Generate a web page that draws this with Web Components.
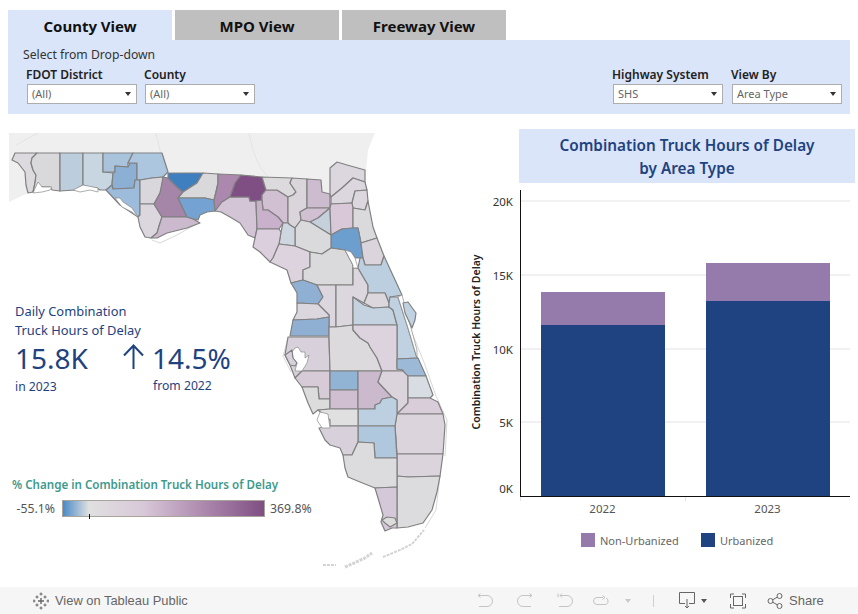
<!DOCTYPE html>
<html>
<head>
<meta charset="utf-8">
<title>Combination Truck Hours of Delay</title>
<style>
  html, body { margin: 0; padding: 0; background: #fff; }
  body { font-family: "Noto Sans", "Open Sans", sans-serif; width: 858px; height: 614px; overflow: hidden; }
</style>
</head>
<body>
<delay-dashboard></delay-dashboard>

<script>
const NAVY = '#1f4280';
const PURPLE = '#957bab';
const BAND = '#dae5f9';

class ViewTab extends HTMLElement {
  constructor() {
    super();
    this.attachShadow({ mode: 'open' });
    this.shadowRoot.innerHTML = `
      <style>
        :host {
          display: flex;
          align-items: center;
          justify-content: center;
          width: 164px;
          height: 30px;
          padding-top: 1px;
          box-sizing: border-box;
          background: #bfbfbf;
          color: #111;
          font-size: 15px;
          font-weight: 700;
        }
        :host([active]) { background: ${BAND}; }
      </style>
      <slot></slot>
    `;
  }
}
customElements.define('view-tab', ViewTab);

class FilterSelect extends HTMLElement {
  constructor() {
    super();
    this.attachShadow({ mode: 'open' });
  }

  connectedCallback() {
    this.shadowRoot.innerHTML = `
      <style>
        :host { display: block; width: 110px; }
        .label {
          font-size: 12px;
          font-weight: 600;
          line-height: 15px;
          color: #222;
          margin-left: -1px;
          white-space: nowrap;
        }
        .box {
          box-sizing: border-box;
          height: 20px;
          margin-top: 2px;
          padding: 0 5px 2px 4px;
          display: flex;
          align-items: center;
          justify-content: space-between;
          background: #fff;
          border: 1px solid #adadad;
          color: #666;
          font-size: 11px;
        }
        .caret {
          width: 0;
          height: 0;
          margin-top: 2px;
          border-left: 3.5px solid transparent;
          border-right: 3.5px solid transparent;
          border-top: 4px solid #333;
        }
      </style>
      <div class="label">${this.getAttribute('label')}</div>
      <div class="box"><slot></slot><span class="caret"></span></div>
    `;
  }
}
customElements.define('filter-select', FilterSelect);

class FilterBar extends HTMLElement {
  constructor() {
    super();
    this.attachShadow({ mode: 'open' });
    this.shadowRoot.innerHTML = `
      <style>
        :host {
          display: block;
          box-sizing: border-box;
          margin: 0 8px;
          height: 74px;
          padding: 7px 8px 0 15px;
          background: ${BAND};
        }
        .hint { font-size: 12.2px; line-height: 16px; color: #333; }
        .rows { display: flex; margin-top: 4px; padding-left: 4px; }
        .group { display: flex; gap: 8px; }
        .group.right { margin-left: auto; gap: 9px; }
      </style>
      <div class="hint">Select from Drop-down</div>
      <div class="rows">
        <div class="group">
          <filter-select label="FDOT District">(All)</filter-select>
          <filter-select label="County">(All)</filter-select>
        </div>
        <div class="group right">
          <filter-select label="Highway System">SHS</filter-select>
          <filter-select label="View By">Area Type</filter-select>
        </div>
      </div>
    `;
  }
}
customElements.define('filter-bar', FilterBar);

// county shapes in page pixels, traced off the screenshot
const COUNTIES = [
  ['#dcd9df', '15,153 37,153 32,158 31,163 33,170 36,175 35,183 33,192 28,193 26,185 25,172 18,163 12,160'],
  ['#d9d9db', '37,153 60,153 60,191 52,190 50,187 41,187 38,190 33,192 35,183 36,175 33,170 31,163 32,158'],
  ['#bccddd', '60,153 83,153 83,185 75,190 60,191'],
  ['#c8d6e2', '83,153 103,153 103,172 113,173 112,185 106,190 100,190 97,188 90,187 83,185'],
  ['#a9c3dd', '103,153 133,153 128,163 128,167 115,166 115,172 103,172'],
  ['#8cafd4', '115,166 128,167 130,163 137,163 137,180 135,180 134,188 113,189 112,185 113,173 115,172'],
  ['#adc6e0', '133,153 162,153 168,172 163,177 152,178 140,180 137,180 137,163 130,163 128,163'],
  ['#9dbbdb', '106,190 112,185 113,189 134,188 135,180 140,180 140,215 138,217 120,205'],
  ['#d9d6dc', '140,180 152,178 163,177 165,178 160,193 154,204 140,204'],
  ['#dcd6de', '140,204 154,204 162,217 160,223 157,233 151,238 145,237 140,227 138,217 140,215'],
  ['#a585a8', '163,177 168,178 177,187 183,192 178,198 187,217 162,217 154,204 160,193'],
  ['#cbb9cd', '162,217 187,217 193,219 200,223 187,228 167,233 157,238 151,238 157,233 160,223'],
  ['#3f7fc0', '168,173 203,173 197,183 183,192 177,187 168,178'],
  ['#d9d9db', '203,173 218,174 218,183 216,192 214,200 205,198 181,198 178,198 183,192 197,183'],
  ['#74a3d3', '178,198 181,198 205,198 214,200 215,211 207,212 200,215 198,220 187,217'],
  ['#ad88ae', '218,174 241,175 235,183 230,197 222,202 215,211 214,200 216,192 218,183'],
  ['#d3c5d6', '230,197 249,197 250,201 256,201 257,229 255,238 248,235 240,223 230,217 221,212 215,211 222,202'],
  ['#7f4f83', '241,175 262,177 266,190 262,195 262,200 256,201 250,201 249,197 230,197 235,183'],
  ['#d0c0d2', '262,195 266,190 277,190 285,195 288,197 288,223 283,223 278,217 268,210 263,210 262,200'],
  ['#c9b0cb', '256,201 262,200 263,210 268,210 278,217 283,223 279,229 257,229'],
  ['#dcdadd', '262,177 292,178 290,183 296,192 293,195 288,197 285,195 277,190 266,190'],
  ['#d9d5db', '292,178 307,179 307,208 300,212 301,220 295,228 290,225 288,223 288,197 293,195 296,192 290,183'],
  ['#cdbccf', '307,179 321,180 322,192 330,194 330,208 307,208'],
  ['#d0c0d2', '307,208 330,208 318,218 310,222 301,220 300,212'],
  ['#c5d0dc', '330,208 331,235 310,222 318,218'],
  ['#dcd6de', '330,168 337,162 347,165 365,170 365,182 353,178 342,188 331,197 330,194'],
  ['#dcd6de', '331,197 342,188 353,178 365,182 367,190 355,191 352,203 331,204'],
  ['#dcd6de', '355,191 367,190 368,201 365,210 353,208 352,203'],
  ['#d8c8d8', '331,204 352,203 353,208 353,228 342,229 331,235 330,208'],
  ['#dad9dc', '353,208 365,210 368,201 373,227 377,238 361,243 358,228 353,228'],
  ['#6d9fce', '342,229 353,228 358,228 361,243 363,258 355,258 351,252 347,253 345,250 331,248 331,235'],
  ['#dcd4dd', '361,243 377,238 384,256 381,265 365,265 363,258'],
  ['#dadadc', '301,220 310,222 331,235 331,248 322,254 310,252 295,246 295,228'],
  ['#ced7df', '283,223 288,223 290,225 295,228 295,246 279,244 281,232'],
  ['#dccfdd', '257,229 279,229 281,232 279,244 273,258 270,262 260,252 253,247 255,238'],
  ['#ddd3de', '279,244 295,246 310,252 310,267 303,270 303,280 291,283 287,270 270,262 273,258'],
  ['#dadadc', '310,252 322,254 331,248 345,250 353,265 353,285 317,285 303,280 303,270 310,267'],
  ['#8fb0d2', '291,283 303,280 317,285 323,297 318,304 297,303 297,293'],
  ['#dcd6de', '317,285 336,285 336,327 329,327 329,315 318,304 323,297'],
  ['#dcd6de', '336,285 353,285 353,268 358,268 368,285 368,293 364,303 353,297 353,325 336,327'],
  ['#bccfe0', '360,258 363,258 365,265 381,265 384,256 402,295 390,297 389,303 385,293 368,293 368,285 358,268'],
  ['#dbd7dd', '364,303 368,293 385,293 389,303 389,307 373,308'],
  ['#c5d3e0', '353,297 364,305 373,308 389,307 393,310 397,325 353,325'],
  ['#c0d2e2', '390,297 398,297 408,328 417,358 397,359 397,325 393,310 389,307 389,303'],
  ['#dcd6de', '297,303 318,304 329,315 329,317 317,319 293,320 297,312'],
  ['#8fb0d2', '293,320 317,319 329,317 329,336 290,336'],
  ['#d8d0db', '288,337 329,337 330,371 302,371 295,378 290,365 285,355'],
  ['#dcdadd', '329,337 329,327 336,327 353,325 353,330 360,338 368,343 370,347 377,358 382,371 330,371'],
  ['#dcd3de', '353,325 397,325 397,369 403,370 403,371 382,371 377,358 370,347 368,343 360,338 353,330'],
  ['#9cb9d8', '397,359 418,358 426,376 403,376 403,370 397,369'],
  ['#d7cbd8', '302,371 330,371 330,399 319,399 318,387 302,387 295,378'],
  ['#dcdcdd', '302,387 318,387 319,399 330,399 330,409 318,410 313,414 308,403'],
  ['#92b4d4', '330,371 358,371 358,390 330,390'],
  ['#cfbfd1', '330,390 358,390 358,409 330,409'],
  ['#cbbacd', '358,371 382,371 378,382 392,397 382,399 380,403 375,405 375,409 358,409'],
  ['#dcd4dd', '382,371 403,371 408,376 408,398 408,403 397,414 397,400 392,397 378,382'],
  ['#d7dde2', '408,376 426,376 433,395 430,398 408,398'],
  ['#d8cdd9', '408,398 430,398 438,402 443,414 397,414 408,403'],
  ['#dcd4dd', '397,414 443,414 445,425 443,454 397,454 395,426'],
  ['#dcd4dd', '397,454 443,454 440,476 408,477 397,476'],
  ['#dcdbde', '397,476 408,477 440,476 437,492 432,510 423,523 408,527 397,528'],
  ['#bcd0e2', '358,409 375,409 375,405 380,403 382,399 392,397 397,400 397,414 395,426 358,426'],
  ['#b0c8de', '358,426 395,426 397,458 375,458 374,443 358,442'],
  ['#e0e0e0', '318,410 330,409 358,409 358,426 330,426 330,420'],
  ['#d8d0db', '330,426 358,426 358,442 352,455 343,455 340,448 330,445 325,440 319,428'],
  ['#dcdbde', '343,455 352,455 358,442 374,443 375,458 397,458 397,487 375,488 360,482 348,477 345,468'],
  ['#d5c8d8', '375,488 397,487 397,528 392,528 385,531 381,522 383,515 378,498'],
  ['#dcdcdd', '382,520 387,517 395,518 397,523 390,527 385,523'],
];

const WATER = [
  '33,193 38,182 42,187 52,187 50,190 42,192',
  '73,190 83,185 98,188 98,192 90,190 80,192',
  '115,198 120,198 123,202 132,208 138,217 132,212 122,207',
  '295,348 298,347 301,352 305,352 305,358 309,355 307,363 302,371 295,371 297,363 293,358 292,352',
  '320,412 328,414 330,428 322,428 317,420',
  '345,250 351,252 355,258 358,268 353,268 353,265',
  '398,297 402,295 417,350 417,358 408,328',
];

// Pinellas and the barrier island sit on top of the water
const ISLANDS = [
  ['#d8d0db', '285,355 292,350 293,358 297,363 295,366 290,365'],
  ['#c0d2e2', '403,303 408,302 416,313 415,320 412,328 405,313'],
];

class FloridaMap extends HTMLElement {
  constructor() {
    super();
    this.attachShadow({ mode: 'open' });
  }

  connectedCallback() {
    const shape = ([fill, points]) => `<polygon fill="${fill}" points="${points}"/>`;
    const water = WATER.map((points) => `<polygon points="${points}"/>`).join('');
    this.shadowRoot.innerHTML = `
      <style>
        :host { display: block; }
        svg { display: block; }
        .counties polygon { stroke: #808080; stroke-width: 1.2; stroke-linejoin: round; }
        .water polygon { fill: #fff; stroke: #8a8a8a; stroke-width: .7; }
        .faint { fill: none; stroke: #e4e4e4; stroke-width: 1; }
        .coast { fill: none; stroke: #d8d8d8; stroke-width: 1; }
        .keys { fill: none; stroke: #d4d4d4; stroke-width: 2; stroke-dasharray: 3 1; }
      </style>
      <svg width="470" height="473" viewBox="0 114 470 473">
        <polygon fill="#efefef" points="9,133 375,133 368,150 366,171 345,165 337,161 330,168 330,194 322,192 300,178 165,172 140,160 60,155 28,193 9,202"/>
        <path class="faint" d="M38 133 L16 145 M156 133 L165 172 M249 133 Q255 165 268 177"/>
        <path class="coast" d="M152 240 L160 243 L177 235 L198 223 M288 338 L283 356 L291 372 M411 330 L425 365 L436 396 L447 420 L445 456 M440 476 L436 510 L425 528"/>
        <g class="counties">${COUNTIES.map(shape).join('')}</g>
        <g class="water">${water}</g>
        <g class="counties">${ISLANDS.map(shape).join('')}</g>
        <path class="keys" style="stroke-width:3" d="M345 567 L352 564 L365 558 L372 553"/>
        <path class="keys" d="M383 557 L400 550 L412 544 L424 530"/>
        <path class="keys" d="M323 565 L336 565"/>
      </svg>
    `;
  }
}
customElements.define('florida-map', FloridaMap);

class KpiPanel extends HTMLElement {
  constructor() {
    super();
    this.attachShadow({ mode: 'open' });
    this.shadowRoot.innerHTML = `
      <style>
        :host { display: block; padding: 188px 0 0 15px; pointer-events: none; }
        .head { font-size: 12.9px; line-height: 19px; color: ${NAVY}; }
        .grid {
          display: grid;
          grid-template-columns: 108px 29px auto;
          width: fit-content;
          color: ${NAVY};
          margin-top: 1px;
        }
        .big { font-size: 28px; line-height: 34px; height: 34px; white-space: nowrap; }
        .small { font-size: 12.2px; line-height: 18px; margin-top: 3px; }
        .arrow { padding-top: 3px; }
        .arrow svg { display: block; }
        .from { grid-column: 3; padding-left: 1px; margin-top: 2px; }
        .in { grid-column: 1 / span 2; }
        .scale { margin: 81px 0 0 -3px; }
        .title {
          font-size: 11.6px;
          font-weight: 600;
          line-height: 16px;
          color: #3f9a8e;
          white-space: nowrap;
        }
        .row {
          display: flex;
          align-items: center;
          margin-top: 7px;
          color: #555;
          font-size: 12.3px;
        }
        .low { width: 43px; padding-right: 7px; text-align: right; }
        .ramp {
          position: relative;
          box-sizing: border-box;
          width: 203px;
          height: 17px;
          margin-right: 5px;
          border: 1px solid #a8a39b;
          background: linear-gradient(to right, #4a8ac7 0%, #e0e0e0 13%, #d8c8d8 40%, #ad88ae 70%, #7f4f83 100%);
        }
        .ramp i {
          position: absolute;
          left: 26px;
          bottom: -3px;
          width: 1px;
          height: 5px;
          background: #111;
        }
      </style>
      <div class="head">Daily Combination<br>Truck Hours of Delay</div>
      <div class="grid">
        <div class="big">15.8K</div>
        <div class="arrow">
          <svg width="21" height="25" viewBox="0 0 21 25" fill="none" stroke="${NAVY}" stroke-width="2">
            <path d="M10.5 25 V1.5 M1 11.5 L10.5 1.5 L20 11.5"/>
          </svg>
        </div>
        <div class="big">14.5%</div>
        <div class="small in">in 2023</div>
        <div class="small from">from 2022</div>
      </div>
      <div class="scale">
        <div class="title">% Change in Combination Truck Hours of Delay</div>
        <div class="row">
          <span class="low">-55.1%</span>
          <div class="ramp"><i></i></div>
          <span>369.8%</span>
        </div>
      </div>
    `;
  }
}
customElements.define('kpi-panel', KpiPanel);

class DelayChart extends HTMLElement {
  constructor() {
    super();
    this.attachShadow({ mode: 'open' });
  }

  connectedCallback() {
    const grid = [201, 275, 349, 422]
      .map((y) => `<line x1="521" x2="850" y1="${y}" y2="${y}" stroke="#e3e3e3" stroke-width="1"/>`)
      .join('');
    const ticks = [['20K', 206], ['15K', 280], ['10K', 354], ['5K', 427], ['0K', 493]]
      .map(([t, y]) => `<text x="513" y="${y}" text-anchor="end">${t}</text>`)
      .join('');
    this.shadowRoot.innerHTML = `
      <style>
        :host { display: block; }
        svg { display: block; font-family: "Noto Sans", "Open Sans", sans-serif; }
        .ticks { font-size: 11.5px; fill: #333; }
        .years { font-size: 11.5px; fill: #555; }
        .axis-title { font-size: 10.5px; font-weight: 600; fill: #222; }
        .legend {
          display: flex;
          margin: 6px 0 0 111px;
          font-size: 11px;
          line-height: 16px;
          color: #666;
        }
        .item { display: flex; gap: 5px; width: 120px; }
        .swatch { width: 14px; height: 14px; }
      </style>
      <svg width="388" height="344" viewBox="470 183 388 344">
        ${grid}
        <rect x="541" y="325" width="124" height="171" fill="${NAVY}"/>
        <rect x="541" y="292" width="124" height="33" fill="${PURPLE}"/>
        <rect x="706" y="301" width="124" height="195" fill="${NAVY}"/>
        <rect x="706" y="263" width="124" height="38" fill="${PURPLE}"/>
        <line x1="520.5" x2="520.5" y1="190" y2="496.5" stroke="#111"/>
        <line x1="520" x2="850" y1="496.5" y2="496.5" stroke="#111"/>
        <line x1="520.5" x2="520.5" y1="497" y2="501" stroke="#e3e3e3"/>
        <line x1="685.5" x2="685.5" y1="497" y2="501" stroke="#e3e3e3"/>
        <g class="ticks">${ticks}</g>
        <g class="years" text-anchor="middle">
          <text x="602.5" y="513">2022</text>
          <text x="767.5" y="513">2023</text>
        </g>
        <text class="axis-title" text-anchor="middle" transform="translate(480 342) rotate(-90)">Combination Truck Hours of Delay</text>
      </svg>
      <div class="legend">
        <div class="item"><span class="swatch" style="background:${PURPLE}"></span>Non-Urbanized</div>
        <div class="item"><span class="swatch" style="background:${NAVY}"></span>Urbanized</div>
      </div>
    `;
  }
}
customElements.define('delay-chart', DelayChart);

class ViewToolbar extends HTMLElement {
  constructor() {
    super();
    this.attachShadow({ mode: 'open' });
    this.shadowRoot.innerHTML = `
      <style>
        :host {
          display: flex;
          align-items: center;
          height: 27px;
          padding-left: 33px;
          background: #f6f6f6;
          color: #666;
          font-family: "Liberation Sans", Arial, sans-serif;
          font-size: 12.9px;
        }
        svg { display: block; flex: none; fill: none; stroke-width: 1; }
        .off { stroke: #c4c4c4; }
        .on { stroke: #666; }
        .public { margin-left: 6px; width: 133px; white-space: nowrap; }
        .tools { display: flex; align-items: center; margin-left: 289px; }
        .caret {
          width: 0;
          height: 0;
          border-left: 3px solid transparent;
          border-right: 3px solid transparent;
          border-top: 4px solid #c9c9c9;
        }
        .caret.dark { border-top-color: #555; border-left-width: 3.5px; border-right-width: 3.5px; }
        .sep { width: 1px; height: 12px; background: #cfcfcf; }
        .share { margin-left: 6px; font-size: 13px; }
      </style>
      <svg width="16" height="18" viewBox="0 0 16 18" stroke="#666">
        <path stroke-width="1.4" d="M8 6v6M5 9h6"/>
        <path d="M4 3.500v3M2.500 5h3M12 3.500v3M10.500 5h3M4 11.500v3M2.500 13h3M12 11.500v3M10.500 13h3M8 .5v3M6.500 2h3M8 14.500v3M6.500 16h3M1 7.500v3M-.5 9h3M15 7.500v3M13.500 9h3"/>
      </svg>
      <span class="public">View on Tableau Public</span>
      <div class="tools">
        <svg class="off" width="16" height="16" viewBox="0 0 16 16"><path d="M1 2.500h9a5.500 5.500 0 0 1 0 11H2"/><path d="M3.500 .5 1 2.500l2.500 2"/></svg>
        <svg class="off" style="margin-left:24px" width="16" height="16" viewBox="0 0 16 16"><path d="M15 2.500H6a5.500 5.500 0 0 0 0 11h8"/><path d="M12.500 .5 15 2.500l-2.500 2"/></svg>
        <svg class="off" style="margin-left:24px" width="16" height="16" viewBox="0 0 16 16"><path d="M1 .5v4M3 2.500h7a5.500 5.500 0 0 1 0 11H2"/><path d="M5 .5 3 2.500l2 2"/></svg>
        <svg class="off" style="margin-left:20px" width="16" height="16" viewBox="0 0 16 16"><path d="M10 4.500H4a3 3 0 0 0 0 7h8a3 3 0 0 0 3-3.500 3 3 0 0 0-2-3"/><path d="M9.500 2.500 12 4.500 9.500 6.500"/></svg>
        <span class="caret" style="margin-left:16px"></span>
        <span class="sep" style="margin-left:22px"></span>
        <svg class="on" style="margin-left:25px" width="16" height="17" viewBox="0 0 16 17"><path d="M6 11.500H.5v-11h15v11H10M8 7v9"/><path d="M6 14l2 2 2-2"/></svg>
        <span class="caret dark" style="margin-left:6px"></span>
        <svg class="on" style="margin-left:23px" width="16" height="16" viewBox="0 0 16 16"><path d="M4 1H.5v4M12 1h3.500v4M4 15H.5v-4M12 15h3.500v-4"/><rect x="3.500" y="3.500" width="9" height="9"/></svg>
        <svg class="on" style="margin-left:21px" width="16" height="16" viewBox="0 0 16 16"><circle cx="3.500" cy="8" r="2.500"/><circle cx="12.500" cy="3" r="2.500"/><circle cx="12.500" cy="13" r="2.500"/><path d="M5.700 6.800 10.300 4.200M5.700 9.200l4.600 2.600"/></svg>
        <span class="share">Share</span>
      </div>
    `;
  }
}
customElements.define('view-toolbar', ViewToolbar);

class DelayDashboard extends HTMLElement {
  constructor() {
    super();
    this.attachShadow({ mode: 'open' });
    this.shadowRoot.innerHTML = `
      <style>
        :host {
          display: flex;
          flex-direction: column;
          width: 858px;
          height: 614px;
          font-family: "Noto Sans", "Open Sans", sans-serif;
        }
        .tabs { display: flex; gap: 3px; padding: 10px 0 0 8px; }
        .main { display: grid; grid-template-columns: 470px 388px; height: 473px; }
        .stack { display: grid; }
        .stack > * { grid-area: 1 / 1; }
        .side { padding-top: 15px; }
        .chart-title {
          box-sizing: border-box;
          width: 336px;
          height: 54px;
          margin-left: 49px;
          padding-top: 5px;
          background: ${BAND};
          color: ${NAVY};
          font-size: 15.3px;
          font-weight: 600;
          line-height: 23px;
          text-align: center;
        }
      </style>
      <div class="tabs">
        <view-tab active>County View</view-tab>
        <view-tab>MPO View</view-tab>
        <view-tab>Freeway View</view-tab>
      </div>
      <filter-bar></filter-bar>
      <div class="main">
        <div class="stack">
          <florida-map></florida-map>
          <kpi-panel></kpi-panel>
        </div>
        <div class="side">
          <div class="chart-title">Combination Truck Hours of Delay<br>by Area Type</div>
          <delay-chart></delay-chart>
        </div>
      </div>
      <view-toolbar></view-toolbar>
    `;
  }
}
customElements.define('delay-dashboard', DelayDashboard);
</script>
</body>
</html>
